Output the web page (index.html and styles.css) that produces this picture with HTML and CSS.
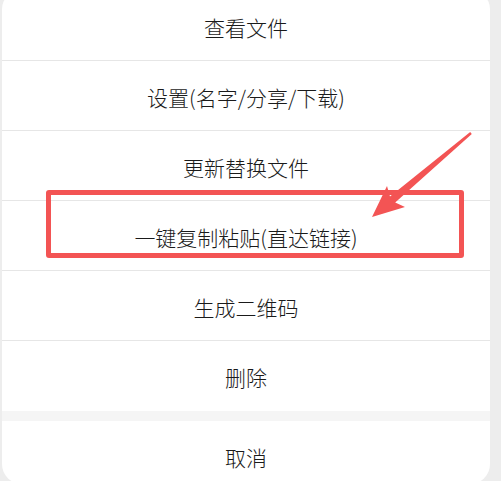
FILE: index.html
```html
<!DOCTYPE html>
<html lang="zh-CN">
<head>
  <meta charset="UTF-8" />
  <meta name="viewport" content="width=device-width, initial-scale=1.0"/>
  <title>文件操作</title>
  <link rel="stylesheet" href="styles.css">
</head>
<body>
  <div class="screen">
    <div class="sheet">
      <div class="sheet-item">查看文件</div>
      <div class="sheet-item">设置(名字/分享/下载)</div>
      <div class="sheet-item">更新替换文件</div>
      <div class="sheet-item">一键复制粘贴(直达链接)</div>
      <div class="sheet-item">生成二维码</div>
      <div class="sheet-item">删除</div>
      <div class="sheet-gap"></div>
      <div class="sheet-item sheet-cancel">取消</div>
    </div>

    <!-- annotation drawn over the screenshot -->
    <div class="mark-box"></div>
    <svg class="mark-arrow" width="501" height="481" viewBox="0 0 501 481">
      <polygon points="372,226 387,195 390,205.5 470.2,141.1 471.8,142.9 395.2,211.5 405,216" fill="#f35454"/>
    </svg>
  </div>
</body>
</html>
```

FILE: styles.css
```css
html, body {
  margin: 0;
  padding: 0;
  height: 100%;
  overflow: hidden;
}

body {
  font-family: "Noto Sans CJK SC", "Noto Sans", sans-serif;
  background: #ededed;
  color: #1a1a1a;
}

.screen {
  position: relative;
  width: 501px;
  height: 481px;
}

.sheet {
  width: 488px;
  margin: -9px 0 0 2px;
  background: #fff;
  border-radius: 18px 18px 20px 20px;
  overflow: hidden;
}

.sheet-item {
  height: 70px;
  display: flex;
  align-items: center;
  justify-content: center;
  font-size: 21px;
  font-weight: 300;
  box-sizing: border-box;
  border-bottom: 1px solid #e6e6e6;
  padding-top: 2px;
}

.sheet-item:nth-child(6) {
  border-bottom: none;
}

.sheet-gap {
  height: 10px;
  background: #f5f5f5;
}

.sheet-cancel {
  height: 63px;
  padding-top: 9px;
  border-bottom: none;
}

.mark-box {
  position: absolute;
  left: 46px;
  top: 199px;
  width: 418px;
  height: 68px;
  box-sizing: border-box;
  border: 5px solid #f35454;
  border-radius: 3px;
}

.mark-arrow {
  position: absolute;
  left: 0;
  top: 0;
}
```
